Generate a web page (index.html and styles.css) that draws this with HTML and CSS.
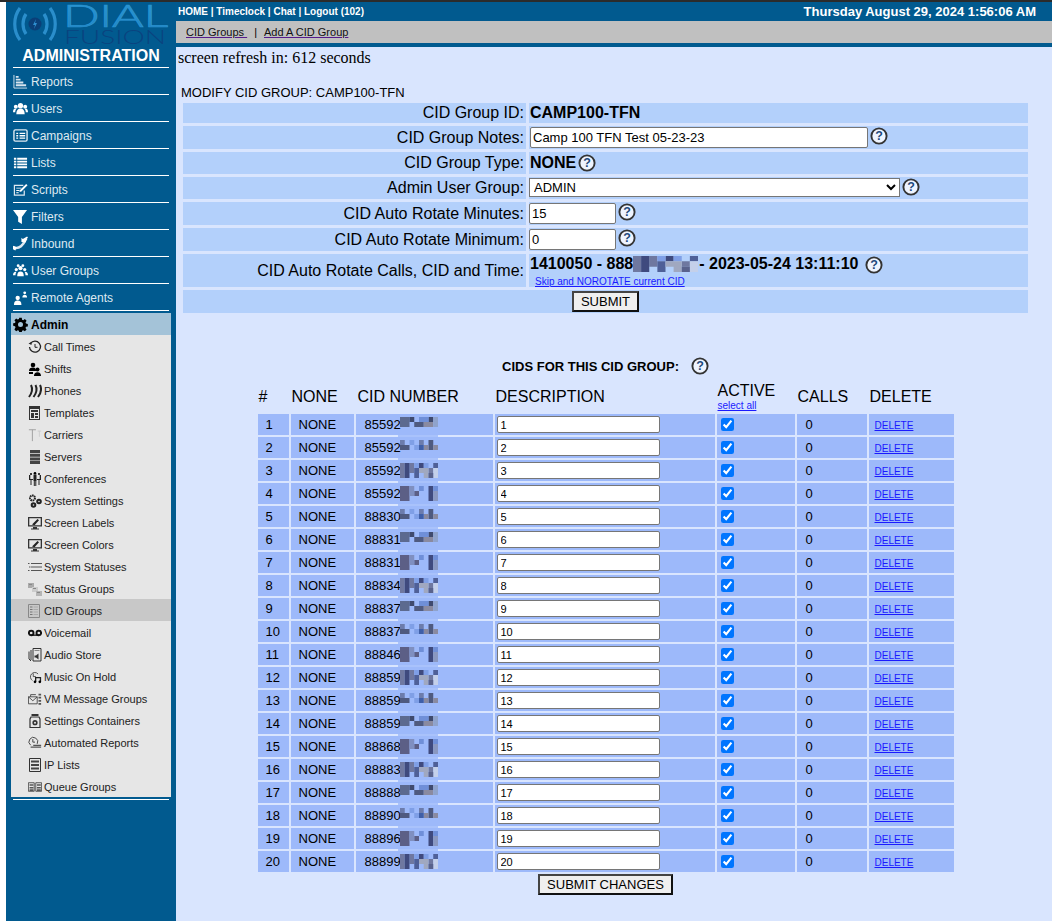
FILE: index.html
```html
<!DOCTYPE html>
<html lang="en">
<head>
    <meta charset="UTF-8">
    <title>ADMINISTRATION: CID Groups</title>
    <link rel="stylesheet" href="styles.css">
</head>
<body>
<svg class="defs" aria-hidden="true">
    <symbol id="help" viewBox="0 0 18 18"><circle cx="9" cy="9" r="7.600" fill="#eef4ff" stroke="#333" stroke-width="1.900"/><text x="9" y="13.400" text-anchor="middle" font-family="Liberation Sans" font-weight="700" font-size="12.500" fill="#1f4a7c">?</text></symbol>
    <symbol id="px1" viewBox="0 0 8 3" preserveAspectRatio="none"><path fill="#5c6a8f" d="M0 0h2v2H0z"/><path fill="#3f4a6e" d="M2 0h1v1H2zM6 0h1v1H6z"/><path fill="#6f8fd8" d="M4 0h2v1H4z"/><path fill="#4f5a7f" d="M3 1h2v1H3z"/><path fill="#8a8aa0" d="M5 1h2v1H5z"/><path fill="#8fa3cc" d="M7 0h1v2H7z"/></symbol>
    <symbol id="px2" viewBox="0 0 8 3" preserveAspectRatio="none"><path fill="#4f5a7f" d="M0 1h2v1H0zM6 0h1v2H6z"/><path fill="#6c7cac" d="M0 0h1v1H0zM4 0h1v1H4z"/><path fill="#7f9fe6" d="M2 0h1v1H2zM3 1h1v1H3z"/><path fill="#8a8aa0" d="M5 1h1v1H5zM7 1h1v1H7z"/><path fill="#3f5fa8" d="M4 1h1v1H4z"/></symbol>
    <symbol id="px3" viewBox="0 0 8 3" preserveAspectRatio="none"><path fill="#6f78a0" d="M0 0h1v3H0zM2 0h1v2H2zM6 1h1v1H6z"/><path fill="#3f4a7e" d="M1 0h1v3H1zM4 0h1v1H4z"/><path fill="#7f9fe6" d="M3 0h1v1H3zM5 0h1v1H5z"/><path fill="#4f6098" d="M3 1h1v2H3zM7 0h1v1H7z"/><path fill="#a0a8c0" d="M4 1h2v1H4zM5 2h1v1H5z"/><path fill="#c4d0ea" d="M7 1h1v2H7z"/><path fill="#59628c" d="M6 2h1v1H6z"/></symbol>
    <symbol id="px4" viewBox="0 0 8 3" preserveAspectRatio="none"><path fill="#5c5f86" d="M0 0h2v3H0zM3 1h1v1H3z"/><path fill="#7f8fc0" d="M2 0h1v2H2z"/><path fill="#3f4a7e" d="M6 0h1v3H6z"/><path fill="#6f8fd8" d="M7 0h1v1H7zM4 0h1v1H4z"/><path fill="#8a98c0" d="M7 1h1v2H7z"/></symbol>
    <symbol id="bars" viewBox="0 0 16 16"><path fill="none" stroke="#d6e4ee" stroke-width="1" d="M1 1v14h14"/><path fill="#d6e4ee" d="M3 2h3v2H3zM3 5h5v2H3zM3 8h8v2H3zM3 11h11v2H3z"/></symbol>
    <symbol id="users" viewBox="0 0 16 16"><circle cx="8" cy="5" r="2.800"/><path d="M3.500 14c0-4 1.600-6 4.500-6s4.500 2 4.500 6z"/><circle cx="3" cy="6" r="2.100"/><circle cx="13" cy="6" r="2.100"/><path d="M0 12c0-3 1-4 3-4l.8.300C2.800 9.300 2.400 10.500 2.400 12zM16 12c0-3-1-4-3-4l-.8.300c1 1 1.400 2.200 1.400 3.700z"/></symbol>
    <symbol id="campaigns" viewBox="0 0 16 16"><rect x="1" y="2" width="14" height="12" rx="1.500" fill="none" stroke="currentColor" stroke-width="1.500"/><path d="M3.500 5h2v1.500h-2zM7 5h6v1.500H7zM3.500 7.500h2V9h-2zM7 7.500h6V9H7zM3.500 10h2v1.500h-2zM7 10h6v1.500H7z"/></symbol>
    <symbol id="lists" viewBox="0 0 16 16"><path d="M1 3h2.500v2H1zM4.500 3H15v2H4.500zM1 6h2.500v2H1zM4.500 6H15v2H4.500zM1 9h2.500v2H1zM4.500 9H15v2H4.500zM1 12h2.500v2H1zM4.500 12H15v2H4.500z"/></symbol>
    <symbol id="scripts" viewBox="0 0 16 16"><path fill="none" stroke="currentColor" stroke-width="1.300" d="M12 9v5H1.500V3.500H11"/><path d="M3.500 6H9v1H3.500zM3.500 8.500H7v1H3.500zM3.500 11H6v1H3.500z"/><path d="M14 2l1.500 1.500L9 10l-2.200.6.700-2.100z"/></symbol>
    <symbol id="funnel" viewBox="0 0 16 16"><path d="M0 1h15L9.500 8.500V16L5.500 13.500V8.500z"/></symbol>
    <symbol id="inbound" viewBox="0 0 16 16"><path fill="none" stroke="currentColor" stroke-width="2.800" stroke-linecap="round" d="M1.500 12.500c5 1.500 10-3 11-8"/><path d="M0 10.500l4 1.500-1.500 3.500L0 14zM10 5l4-3 1.500 1L13 7.500z"/><path d="M15 .5l1 1-3.500 3L14 6.500H9V1.800l1.500 1.500z"/></symbol>
    <symbol id="ugroups" viewBox="0 0 16 16"><circle cx="8" cy="5.500" r="2.200"/><path d="M4.500 14c0-3.500 1.300-5 3.500-5s3.500 1.500 3.500 5z"/><circle cx="3.500" cy="7" r="1.700"/><circle cx="12.500" cy="7" r="1.700"/><circle cx="5.500" cy="2.800" r="1.500"/><circle cx="10.500" cy="2.800" r="1.500"/><path d="M0 13c0-2.500 1-3.800 3-3.800l.6.300c-.7 1-.9 2-.9 3.500zM16 13c0-2.500-1-3.800-3-3.800l-.6.300c.7 1 .9 2 .9 3.500z"/></symbol>
    <symbol id="remote" viewBox="0 0 16 16"><circle cx="5" cy="8.500" r="2.300"/><path d="M1 16c0-3.400 1.500-4.700 4-4.700S9 12.600 9 16z"/><circle cx="12.500" cy="3" r="1.500"/><path d="M10 8c0-2 1-3 2.500-3S15 6 15 8z"/></symbol>
    <symbol id="gear" viewBox="-1 -1 18 18"><path fill-rule="evenodd" d="M6.500 0h3l.4 2.200 1.400.6L13.200 1.500l2.100 2.100-1.300 1.900.6 1.400 2.200.4v3l-2.200.4-.6 1.400 1.300 1.900-2.100 2.100-1.900-1.300-1.400.6-.4 2.200h-3l-.4-2.200-1.400-.6-1.900 1.300-2.100-2.100L2 11.400l-.6-1.400L-.8 9.600v-3l2.200-.4.600-1.400-1.300-1.900 2.100-2.100 1.900 1.300 1.400-.6zM8 5a3 3 0 1 0 0 6 3 3 0 0 0 0-6z"/></symbol>
    <symbol id="clock" viewBox="0 0 14 14"><path fill="none" stroke="#222" stroke-width="1.300" d="M2.500 3.500A5.500 5.500 0 1 1 1.500 7"/><path fill="none" stroke="#222" d="M7 4v3.300h2.500"/><path fill="#222" d="M.5 3.500l3-1.500v3z"/></symbol>
    <symbol id="shifts" viewBox="0 0 14 14"><circle cx="5" cy="3" r="2.300"/><path d="M1 9c0-2.500 1.500-3.500 4-3.500S8 7 8 9z"/><circle cx="9.500" cy="7.500" r="2"/><path d="M6 14c0-2.500 1.200-3.800 3.500-3.800S13 11.500 13 14zM1 10h4v2H1z"/></symbol>
    <symbol id="phones" viewBox="0 0 14 14"><g fill="none" stroke="#222" stroke-width="2"><path d="M3 1c2 4 1 8-2 12"/><path d="M7.500 1c2 4 1 8-2 12"/><path d="M12 1c2 4 1 8-2 12"/></g></symbol>
    <symbol id="templates" viewBox="0 0 14 14"><path fill="#333" fill-rule="evenodd" d="M1 0h11v14H1zM2 3v10h9V3zM3 4h7v2H3zM3 7h3v5H3zM7 7h3v2H7zM7 10h3v2H7z"/></symbol>
    <symbol id="carriers" viewBox="0 0 16 14"><path fill="none" stroke="#999" d="M1 1h8M5 1v13"/><path fill="none" stroke="#ccc" d="M11 2.500h4M13 2.500V9"/></symbol>
    <symbol id="servers" viewBox="0 0 14 14"><path fill="#444" d="M2 0h10v3H2zM2 3.700h10v3H2zM2 7.400h10v3H2zM2 11h10v3H2z"/></symbol>
    <symbol id="confs" viewBox="0 0 14 14"><path fill="#222" d="M1 3h1.300v5H1zM11.700 3H13v5h-1.300zM5.500 2.500h3V9h-3zM2 7h3v1H2zM9 7h3v1H9zM5.800 9h1v5h-1zM7.300 9h1v5h-1zM2.500 8h1v5h-1zM10.500 8h1v5h-1z"/><circle cx="7" cy="1.300" r="1.300"/><circle cx="3" cy="2" r="1"/><circle cx="11" cy="2" r="1"/></symbol>
    <symbol id="settings" viewBox="0 0 14 14"><g fill="none" stroke="#222" stroke-width="2"><circle cx="4.500" cy="4" r="2.500" stroke-dasharray="1.600 .6"/><circle cx="11" cy="7.500" r="1.800"/><circle cx="5.500" cy="11" r="1.800"/></g></symbol>
    <symbol id="screen" viewBox="0 0 14 14"><path fill="#333" fill-rule="evenodd" d="M0 1h14v9.500H0zM1.300 2.300v7h11.400v-7zM5 11h4v1.500h2V13.500H3v-1h2z"/><path fill="#222" d="M4 8.500L9.500 3l1.500 1.200-4.500 5.100z"/></symbol>
    <symbol id="statuses" viewBox="0 0 14 14"><path fill="#555" d="M0 3h1.500v1H0zM3 3h11v1H3zM1 6.500h1.500v1H1zM3 6.500h11v1H3zM0 10h1.500v1H0zM3 10h11v1H3z"/></symbol>
    <symbol id="sgroups" viewBox="0 0 14 14"><path fill="#aaa" d="M0 1h6v5H0z"/><path fill="#ccc" d="M4 5h6v5H4z"/><path fill="#b5b5b5" d="M8 9h6v5H8z"/><path fill="#888" d="M1 2h3v1H1zM5 6h3v1H5zM9 10h3v1H9z"/></symbol>
    <symbol id="cidg" viewBox="0 0 14 14"><path fill="none" stroke="#888" d="M.5.500h11v13H.500z"/><path fill="#777" d="M2 2.500h2.500v1H2zM2 5h2.500v1H2zM2 7.500h2.500v1H2zM2 10h2.500v1H2z"/><path fill="#aaa" d="M5.500 2.500H10v1H5.500zM5.500 5H10v1H5.500zM5.500 7.500H10v1H5.500zM5.500 10H10v1H5.500z"/></symbol>
    <symbol id="vmail" viewBox="0 0 14 14"><g fill="none" stroke="#111" stroke-width="1.900"><circle cx="3.200" cy="7" r="2.300"/><circle cx="10.800" cy="7" r="2.300"/></g><path fill="#111" d="M3 8.500h8v1.300H3z"/></symbol>
    <symbol id="audio" viewBox="0 0 14 14"><path fill="none" stroke="#333" d="M1 3.500V11l2 2M3 2v10M5 .5h8V13H5z"/><path fill="#333" d="M6.500 7.500H8L10.500 5.500v6L8 9.500H6.500z"/><path fill="#888" d="M6.500 2h5v1h-5z"/></symbol>
    <symbol id="moh" viewBox="0 0 16 14"><path fill="none" stroke="#444" d="M11.500 3.500A5 5 0 1 0 5 11M6 3v3.500H9"/><path fill="#222" d="M8 7h7v1.500H8zM8 7h1.500v5.500H8zM13.500 7H15v5.500h-1.500z"/><circle cx="8" cy="12.500" r="1.500"/><circle cx="13.500" cy="12.500" r="1.500"/></symbol>
    <symbol id="vmg" viewBox="0 0 16 14"><path fill="none" stroke="#444" d="M.5 4.500h10v8H.500zM.5 4.500l5 4.500 5-4.500M3 4.500V2h6"/><path fill="#555" d="M12 1h3v2h-3zM12 4.500h3v2h-3zM12 8h3v2h-3zM12 11.500h3v2h-3z"/></symbol>
    <symbol id="container" viewBox="0 0 14 14"><path fill="#333" d="M3.500 0h7v2h-7z"/><path fill="none" stroke="#333" stroke-width="1.200" d="M3 3h8l1 2v8.500H2V5z"/><circle cx="7" cy="8.700" r="2.600" fill="#333"/><circle cx="7" cy="8.700" r="1" fill="#e6e6e6"/></symbol>
    <symbol id="autorep" viewBox="0 0 16 14"><path fill="none" stroke="#444" stroke-width="1.100" d="M10.500 8A5 5 0 1 0 3 9.500M5.500 2.500V6H8"/><path fill="#555" d="M6 9h9v1.500H6zM3 11h12v1.500H3z"/></symbol>
    <symbol id="iplist" viewBox="0 0 14 14"><path fill="none" stroke="#333" d="M1.500.5h11v13h-11z"/><path fill="#444" d="M3 2.500h8v2H3zM3 6h8v2H3zM3 9.500h8v2H3z"/></symbol>
    <symbol id="queue" viewBox="0 0 18 14"><path fill="none" stroke="#333" d="M.5 1.500h7.500v11H.500zM10 1.500h7.500v11H10z"/><path fill="#555" d="M2 3.500h5v2H2zM11.500 3.500h5v2h-5zM2 7h5v2H2zM11.500 7h5v2h-5zM2 10h5v2H2zM11.500 10h5v2h-5z"/></symbol>
</svg>

<div class="page">
    <aside class="sidebar">
        <div class="logo">
            <svg class="logo-waves" viewBox="0 0 44 36">
                <g fill="none" stroke="#2a8ecb" stroke-width="3.200">
                    <path d="M7 2C0 11 0 25 7 34"/><path d="M37 2c7 9 7 23 0 32"/>
                    <path d="M13 8c-4 6-4 14 0 20"/><path d="M31 8c4 6 4 14 0 20"/>
                </g>
                <circle cx="22" cy="18" r="6.500" fill="#0a3f78"/>
                <path fill="#2f8fd0" d="M23 13l-3 6h2l-1 4 3-6h-2z"/>
            </svg>
            <svg class="logo-word" viewBox="0 0 106 43">
                <defs><linearGradient id="dialFill" x1="0" y1="0" x2="0" y2="1"><stop offset="0" stop-color="#2c9ad6"/><stop offset="1" stop-color="#1f7fc0"/></linearGradient></defs>
                <text x="0" y="25" class="logo-dial" textLength="105" lengthAdjust="spacingAndGlyphs">DIAL</text>
                <text x="1" y="42" class="logo-fusion" textLength="102" lengthAdjust="spacingAndGlyphs">FUSION</text>
            </svg>
        </div>
        <div class="side-title">ADMINISTRATION</div>
        <nav class="side-nav">
            <a class="side-item"><svg class="ico"><use href="#bars"/></svg>Reports</a>
            <a class="side-item"><svg class="ico"><use href="#users"/></svg>Users</a>
            <a class="side-item"><svg class="ico"><use href="#campaigns"/></svg>Campaigns</a>
            <a class="side-item"><svg class="ico"><use href="#lists"/></svg>Lists</a>
            <a class="side-item"><svg class="ico"><use href="#scripts"/></svg>Scripts</a>
            <a class="side-item"><svg class="ico"><use href="#funnel"/></svg>Filters</a>
            <a class="side-item"><svg class="ico"><use href="#inbound"/></svg>Inbound</a>
            <a class="side-item"><svg class="ico"><use href="#ugroups"/></svg>User Groups</a>
            <a class="side-item"><svg class="ico"><use href="#remote"/></svg>Remote Agents</a>
        </nav>
        <div class="admin-group">
            <a class="admin-head"><svg class="ico"><use href="#gear"/></svg>Admin</a>
            <a class="sub-item"><svg class="sub-ico"><use href="#clock"/></svg>Call Times</a>
            <a class="sub-item"><svg class="sub-ico"><use href="#shifts"/></svg>Shifts</a>
            <a class="sub-item"><svg class="sub-ico"><use href="#phones"/></svg>Phones</a>
            <a class="sub-item"><svg class="sub-ico"><use href="#templates"/></svg>Templates</a>
            <a class="sub-item"><svg class="sub-ico"><use href="#carriers"/></svg>Carriers</a>
            <a class="sub-item"><svg class="sub-ico"><use href="#servers"/></svg>Servers</a>
            <a class="sub-item"><svg class="sub-ico"><use href="#confs"/></svg>Conferences</a>
            <a class="sub-item"><svg class="sub-ico"><use href="#settings"/></svg>System Settings</a>
            <a class="sub-item"><svg class="sub-ico"><use href="#screen"/></svg>Screen Labels</a>
            <a class="sub-item"><svg class="sub-ico"><use href="#screen"/></svg>Screen Colors</a>
            <a class="sub-item"><svg class="sub-ico"><use href="#statuses"/></svg>System Statuses</a>
            <a class="sub-item"><svg class="sub-ico"><use href="#sgroups"/></svg>Status Groups</a>
            <a class="sub-item current"><svg class="sub-ico"><use href="#cidg"/></svg>CID Groups</a>
            <a class="sub-item"><svg class="sub-ico"><use href="#vmail"/></svg>Voicemail</a>
            <a class="sub-item"><svg class="sub-ico"><use href="#audio"/></svg>Audio Store</a>
            <a class="sub-item"><svg class="sub-ico"><use href="#moh"/></svg>Music On Hold</a>
            <a class="sub-item"><svg class="sub-ico"><use href="#vmg"/></svg>VM Message Groups</a>
            <a class="sub-item"><svg class="sub-ico"><use href="#container"/></svg>Settings Containers</a>
            <a class="sub-item"><svg class="sub-ico"><use href="#autorep"/></svg>Automated Reports</a>
            <a class="sub-item"><svg class="sub-ico"><use href="#iplist"/></svg>IP Lists</a>
            <a class="sub-item"><svg class="sub-ico"><use href="#queue"/></svg>Queue Groups</a>
        </div>
        <div class="side-end"></div>
    </aside>

    <main class="main">
        <div class="topbar">
            <div class="top-links">HOME | Timeclock | Chat | Logout (102)</div>
            <div class="top-date">Thursday August 29, 2024 1:56:06 AM</div>
        </div>
        <div class="subbar"><a>CID Groups&nbsp;</a><span class="sub-sep">|</span><a>Add A CID Group</a></div>
        <div class="refresh">screen refresh in: 612 seconds</div>

        <div class="content">
            <div class="form-title">MODIFY CID GROUP: CAMP100-TFN</div>
            <table class="form-table">
                <colgroup><col class="col-label"><col class="col-value"></colgroup>
                <tr class="h20"><td class="lbl">CID Group ID:</td><td class="val"><b>CAMP100-TFN</b></td></tr>
                <tr class="h23"><td class="lbl">CID Group Notes:</td><td class="val"><input class="txt notes" type="text" value="Camp 100 TFN Test 05-23-23"><svg class="help"><use href="#help"/></svg></td></tr>
                <tr class="h22"><td class="lbl">CID Group Type:</td><td class="val"><b>NONE</b><svg class="help"><use href="#help"/></svg></td></tr>
                <tr class="h22"><td class="lbl">Admin User Group:</td><td class="val"><select class="sel"><option>ADMIN</option></select><svg class="help"><use href="#help"/></svg></td></tr>
                <tr class="h23"><td class="lbl">CID Auto Rotate Minutes:</td><td class="val"><input class="txt short" type="text" value="15"><svg class="help"><use href="#help"/></svg></td></tr>
                <tr class="h23"><td class="lbl">CID Auto Rotate Minimum:</td><td class="val"><input class="txt short" type="text" value="0"><svg class="help"><use href="#help"/></svg></td></tr>
                <tr class="h33"><td class="lbl">CID Auto Rotate Calls, CID and Time:</td>
                    <td class="val rotate">
                        <div class="rot-line"><b>1410050 - 888<svg class="px-wide"><use href="#px3"/></svg>- 2023-05-24 13:11:10</b><svg class="help"><use href="#help"/></svg></div>
                        <a class="skip">Skip and NOROTATE current CID</a>
                    </td></tr>
                <tr class="h23"><td colspan="2" class="submit-cell"><button class="btn" type="button">SUBMIT</button></td></tr>
            </table>

            <div class="cids-title"><b>CIDS FOR THIS CID GROUP:</b><svg class="help"><use href="#help"/></svg></div>

            <table class="cid-table">
                <colgroup><col class="c1"><col class="c2"><col class="c3"><col class="c4"><col class="c5"><col class="c6"><col class="c7"></colgroup>
                <tr class="cid-head"><th>#</th><th>NONE</th><th class="head-num">CID NUMBER</th><th>DESCRIPTION</th><th>ACTIVE<a class="select-all">select all</a></th><th>CALLS</th><th>DELETE</th></tr>
                <tr><td>1</td><td>NONE</td><td class="num">85592<svg class="px"><use href="#px1"/></svg><i class="band"></i></td><td><input class="desc" type="text" value="1"></td><td><input class="chk" type="checkbox" checked></td><td class="calls">0</td><td class="del"><a>DELETE</a></td></tr>
                <tr><td>2</td><td>NONE</td><td class="num">85592<svg class="px"><use href="#px2"/></svg><i class="band"></i></td><td><input class="desc" type="text" value="2"></td><td><input class="chk" type="checkbox" checked></td><td class="calls">0</td><td class="del"><a>DELETE</a></td></tr>
                <tr><td>3</td><td>NONE</td><td class="num">85592<svg class="px"><use href="#px3"/></svg><i class="band"></i></td><td><input class="desc" type="text" value="3"></td><td><input class="chk" type="checkbox" checked></td><td class="calls">0</td><td class="del"><a>DELETE</a></td></tr>
                <tr><td>4</td><td>NONE</td><td class="num">85592<svg class="px"><use href="#px4"/></svg><i class="band"></i></td><td><input class="desc" type="text" value="4"></td><td><input class="chk" type="checkbox" checked></td><td class="calls">0</td><td class="del"><a>DELETE</a></td></tr>
                <tr><td>5</td><td>NONE</td><td class="num">88830<svg class="px"><use href="#px2"/></svg><i class="band"></i></td><td><input class="desc" type="text" value="5"></td><td><input class="chk" type="checkbox" checked></td><td class="calls">0</td><td class="del"><a>DELETE</a></td></tr>
                <tr><td>6</td><td>NONE</td><td class="num">88831<svg class="px"><use href="#px1"/></svg><i class="band"></i></td><td><input class="desc" type="text" value="6"></td><td><input class="chk" type="checkbox" checked></td><td class="calls">0</td><td class="del"><a>DELETE</a></td></tr>
                <tr><td>7</td><td>NONE</td><td class="num">88831<svg class="px"><use href="#px4"/></svg><i class="band"></i></td><td><input class="desc" type="text" value="7"></td><td><input class="chk" type="checkbox" checked></td><td class="calls">0</td><td class="del"><a>DELETE</a></td></tr>
                <tr><td>8</td><td>NONE</td><td class="num">88834<svg class="px"><use href="#px3"/></svg><i class="band"></i></td><td><input class="desc" type="text" value="8"></td><td><input class="chk" type="checkbox" checked></td><td class="calls">0</td><td class="del"><a>DELETE</a></td></tr>
                <tr><td>9</td><td>NONE</td><td class="num">88837<svg class="px"><use href="#px1"/></svg><i class="band"></i></td><td><input class="desc" type="text" value="9"></td><td><input class="chk" type="checkbox" checked></td><td class="calls">0</td><td class="del"><a>DELETE</a></td></tr>
                <tr><td>10</td><td>NONE</td><td class="num">88837<svg class="px"><use href="#px2"/></svg><i class="band"></i></td><td><input class="desc" type="text" value="10"></td><td><input class="chk" type="checkbox" checked></td><td class="calls">0</td><td class="del"><a>DELETE</a></td></tr>
                <tr><td>11</td><td>NONE</td><td class="num">88846<svg class="px"><use href="#px4"/></svg><i class="band"></i></td><td><input class="desc" type="text" value="11"></td><td><input class="chk" type="checkbox" checked></td><td class="calls">0</td><td class="del"><a>DELETE</a></td></tr>
                <tr><td>12</td><td>NONE</td><td class="num">88859<svg class="px"><use href="#px3"/></svg><i class="band"></i></td><td><input class="desc" type="text" value="12"></td><td><input class="chk" type="checkbox" checked></td><td class="calls">0</td><td class="del"><a>DELETE</a></td></tr>
                <tr><td>13</td><td>NONE</td><td class="num">88859<svg class="px"><use href="#px2"/></svg><i class="band"></i></td><td><input class="desc" type="text" value="13"></td><td><input class="chk" type="checkbox" checked></td><td class="calls">0</td><td class="del"><a>DELETE</a></td></tr>
                <tr><td>14</td><td>NONE</td><td class="num">88859<svg class="px"><use href="#px1"/></svg><i class="band"></i></td><td><input class="desc" type="text" value="14"></td><td><input class="chk" type="checkbox" checked></td><td class="calls">0</td><td class="del"><a>DELETE</a></td></tr>
                <tr><td>15</td><td>NONE</td><td class="num">88868<svg class="px"><use href="#px4"/></svg><i class="band"></i></td><td><input class="desc" type="text" value="15"></td><td><input class="chk" type="checkbox" checked></td><td class="calls">0</td><td class="del"><a>DELETE</a></td></tr>
                <tr><td>16</td><td>NONE</td><td class="num">88883<svg class="px"><use href="#px3"/></svg><i class="band"></i></td><td><input class="desc" type="text" value="16"></td><td><input class="chk" type="checkbox" checked></td><td class="calls">0</td><td class="del"><a>DELETE</a></td></tr>
                <tr><td>17</td><td>NONE</td><td class="num">88888<svg class="px"><use href="#px1"/></svg><i class="band"></i></td><td><input class="desc" type="text" value="17"></td><td><input class="chk" type="checkbox" checked></td><td class="calls">0</td><td class="del"><a>DELETE</a></td></tr>
                <tr><td>18</td><td>NONE</td><td class="num">88890<svg class="px"><use href="#px2"/></svg><i class="band"></i></td><td><input class="desc" type="text" value="18"></td><td><input class="chk" type="checkbox" checked></td><td class="calls">0</td><td class="del"><a>DELETE</a></td></tr>
                <tr><td>19</td><td>NONE</td><td class="num">88896<svg class="px"><use href="#px4"/></svg><i class="band"></i></td><td><input class="desc" type="text" value="19"></td><td><input class="chk" type="checkbox" checked></td><td class="calls">0</td><td class="del"><a>DELETE</a></td></tr>
                <tr><td>20</td><td>NONE</td><td class="num">88899<svg class="px"><use href="#px3"/></svg></td><td><input class="desc" type="text" value="20"></td><td><input class="chk" type="checkbox" checked></td><td class="calls">0</td><td class="del"><a>DELETE</a></td></tr>
            </table>
            <div class="changes-row"><button class="btn" type="button">SUBMIT CHANGES</button></div>
        </div>
    </main>
</div>
</body>
</html>
```

FILE: styles.css
```css
html, body {
    margin: 0;
    padding: 0;
    background: #fff;
}
body {
    border-top: 2px solid #2b2b2b;
    font-family: "Liberation Sans", Arial, sans-serif;
    color: #000;
}
.defs {
    display: none;
}
.page {
    display: flex;
    margin-left: 6px;
    min-height: 919px;
}

/* sidebar */
.sidebar {
    width: 170px;
    flex: none;
    background: #015a8f;
}
.logo {
    display: flex;
    height: 43px;
    padding-left: 7px;
    box-sizing: border-box;
}
.logo-waves {
    width: 44px;
    height: 36px;
    margin: 4px 6px 0 0;
    flex: none;
}
.logo-word {
    width: 106px;
    height: 43px;
    flex: none;
    margin-right: -13px;
}
.logo-dial {
    font-family: Lato, "Liberation Sans", sans-serif;
    font-weight: 300;
    font-size: 32px;
    fill: url(#dialFill);
    stroke: #2a93d0;
    stroke-width: .7px;
}
.logo-fusion {
    font-family: Lato, "Liberation Sans", sans-serif;
    font-weight: 300;
    font-size: 20px;
    fill: #0a437f;
}
.side-title {
    height: 22px;
    line-height: 21px;
    margin: 0 7px;
    text-align: center;
    color: #fff;
    font-size: 16px;
    font-weight: bold;
    border-bottom: 1px solid #fff;
}
.side-nav {
    margin: 0 7px;
}
.side-item {
    display: flex;
    align-items: center;
    box-sizing: content-box;
    height: 25px;
    padding-top: 1px;
    color: #dfe9f1;
    fill: #fff;
    font-size: 12px;
    border-bottom: 1px solid #fff;
}
.ico {
    width: 15px;
    height: 15px;
    margin-right: 3px;
    flex: none;
}
.admin-group {
    margin: 2px 5px 0;
    background: #e6e6e6;
}
.admin-head {
    display: flex;
    align-items: center;
    box-sizing: border-box;
    height: 22px;
    padding: 1px 0 0 2px;
    background: #a4c3d8;
    font-size: 12px;
    font-weight: bold;
}
.sub-item {
    display: flex;
    align-items: center;
    box-sizing: border-box;
    height: 22px;
    padding: 1px 0 0 17px;
    font-size: 11px;
    color: #222;
}
.sub-item.current {
    background: #c8c8c8;
}
.sub-ico {
    width: 14px;
    height: 14px;
    margin-right: 2px;
    flex: none;
}
.side-end {
    margin: 2px 7px 0;
    border-top: 1px solid #fff;
}

/* top of the main column */
.main {
    flex: 1;
    background: #d9e5fe;
}
.topbar {
    display: flex;
    justify-content: space-between;
    align-items: center;
    height: 19px;
    padding: 0 16px 0 2px;
    background: #015a8f;
    color: #fff;
    font-weight: bold;
}
.top-links {
    font-size: 10px;
}
.top-date {
    font-size: 13px;
}
.subbar {
    height: 22px;
    line-height: 23px;
    padding-left: 10px;
    background: #c0c0c0;
    border-bottom: 4px solid #015a8f;
    font-size: 11px;
}
.subbar a {
    color: #111;
    text-decoration: underline;
    text-decoration-color: #551a8b;
}
.sub-sep {
    margin: 0 7px;
}
.refresh {
    padding: 2px 0 0 2px;
    height: 38px;
    font-family: "Liberation Serif", "Times New Roman", serif;
    font-size: 16px;
    line-height: 18px;
    box-sizing: border-box;
}
.content {
    width: 851px;
    margin-left: 4px;
}
.form-title {
    height: 15px;
    line-height: 15px;
    padding-left: 1px;
    font-size: 13px;
}

/* form table */
.form-table {
    width: 851px;
    table-layout: fixed;
    border-collapse: separate;
    border-spacing: 3px;
    font-size: 16px;
}
.col-label {
    width: 343px;
}
.form-table td {
    padding: 0;
    background: #b3d0fb;
}
.h20 { height: 20px; }
.h22 { height: 22px; }
.h23 { height: 23px; }
.h33 { height: 33px; }
.form-table .lbl {
    text-align: right;
    padding-right: 2px;
}
.val {
    white-space: nowrap;
}
.val b {
    margin-left: 1px;
}
.txt {
    box-sizing: border-box;
    height: 21px;
    padding: 1px 2px;
    margin: 0 0 0 1px;
    border: 1px solid #767676;
    border-radius: 2px;
    font-family: "Liberation Sans", sans-serif;
    font-size: 13px;
    vertical-align: middle;
}
.notes { width: 338px; }
.txt.short { width: 87px; margin-left: 0; }
.sel {
    box-sizing: border-box;
    width: 371px;
    height: 19px;
    margin-bottom: 2px;
    font-family: "Liberation Sans", sans-serif;
    font-size: 13px;
    vertical-align: middle;
    background: #fff;
}
.help {
    width: 18px;
    height: 18px;
    margin-left: 2px;
    vertical-align: middle;
}
.txt + .help {
    margin-bottom: 4px;
}
.sel + .help {
    margin-bottom: 3px;
}
.rotate {
    vertical-align: top;
}
.rot-line {
    height: 19px;
    line-height: 19px;
}
.rot-line .help {
    margin-left: 7px;
}
.skip {
    display: block;
    height: 12px;
    margin: 2px 0 0 6px;
    font-size: 10px;
    line-height: 14px;
    color: #1a1aff;
    text-decoration: underline;
}
.px-wide {
    width: 65px;
    height: 16px;
    margin-right: 1px;
    vertical-align: -3px;
}
.submit-cell {
    text-align: center;
}
.btn {
    box-sizing: border-box;
    height: 21px;
    padding: 0 7px;
    background: #efefef;
    border: 2px solid;
    border-color: #444 #111 #111 #444;
    font-family: "Liberation Sans", sans-serif;
    font-size: 13px;
    color: #000;
    vertical-align: middle;
}

/* cid table */
.cids-title {
    display: flex;
    justify-content: center;
    align-items: center;
    height: 18px;
    margin-top: 41px;
    font-size: 13px;
}
.cids-title .help {
    margin-left: 12px;
}
.cid-table {
    width: 700px;
    margin: 3px auto 0;
    table-layout: fixed;
    border-collapse: separate;
    border-spacing: 2px;
    font-size: 13px;
}
.c1 { width: 31px; }
.c2 { width: 63px; }
.c3 { width: 137px; }
.c4 { width: 220px; }
.c5 { width: 78px; }
.c6 { width: 70px; }
.c7 { width: 85px; }
.cid-head {
    height: 32px;
}
.cid-head th {
    padding: 2px 0 0 1px;
    text-align: left;
    font-size: 16px;
    font-weight: normal;
    line-height: 18px;
    white-space: nowrap;
}
.cid-head th.head-num {
    padding-left: 2px;
}
.select-all {
    display: block;
    font-size: 10px;
    line-height: 12px;
    color: #1a1aff;
    text-decoration: underline;
}
.cid-table td {
    height: 21px;
    padding: 0 0 0 8px;
    background: #9db9fa;
    white-space: nowrap;
}
.cid-table td.num {
    position: relative;
    padding-left: 9px;
}
.cid-table td:nth-child(4) { padding-left: 2px; }
.cid-table td:nth-child(5) { padding-left: 4px; }
.cid-table td.calls { padding-left: 9px; }
.cid-table td.del { padding-left: 6px; }
.px {
    width: 38px;
    height: 15px;
    margin-left: -1px;
    vertical-align: -3px;
}
.band {
    position: absolute;
    left: 42px;
    bottom: -2px;
    width: 40px;
    height: 2px;
    background: #a9c2fb;
}
.desc {
    display: block;
    box-sizing: border-box;
    width: 163px;
    height: 17px;
    padding: 1px 3px;
    border: 1px solid #767676;
    border-radius: 2px;
    font-family: "Liberation Sans", sans-serif;
    font-size: 11px;
}
.chk {
    display: block;
    width: 13px;
    height: 13px;
    margin: 0;
}
.del a {
    font-size: 10px;
    color: #1a1aff;
    text-decoration: underline;
}
.changes-row {
    text-align: center;
}
```
